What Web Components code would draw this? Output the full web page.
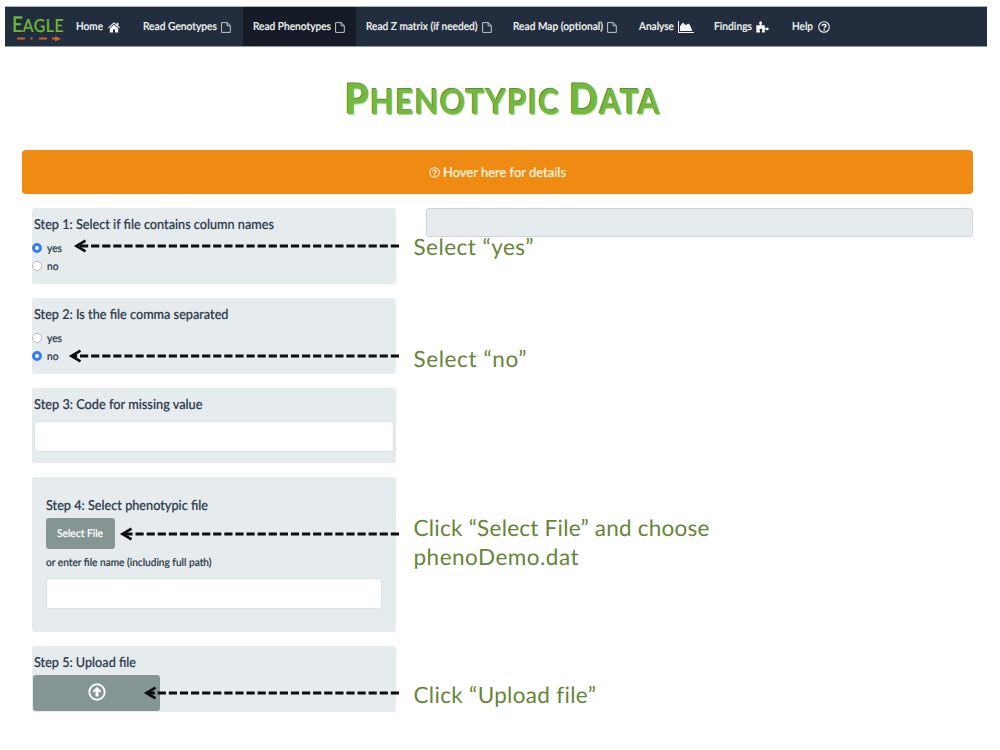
<!DOCTYPE html>
<html lang="en">
<head>
<meta charset="utf-8">
<title>Eagle - Phenotypic Data</title>
<style>
html,body{margin:0;background:#fff}
body{width:1000px;height:750px;overflow:hidden;font-family:Lato,"Open Sans",sans-serif;color:#2c3b4b;text-rendering:geometricPrecision}
</style>
</head>
<body>
<eagle-app></eagle-app>
<script>
const define=(name,css,html,after)=>customElements.define(name,class extends HTMLElement{
  connectedCallback(){
    if(this.shadowRoot)return;
    this.attachShadow({mode:'open'}).innerHTML=`<style>*{box-sizing:border-box}${css}</style>${typeof html==='function'?html(this):html}`;
    if(after)after(this);
  }
});

/* A single line of text set to a given width: condensed by default, or tracked. */
define('fit-text',`:host{display:inline-block;white-space:nowrap;font-weight:500;flex:none;-webkit-text-stroke:.2px currentColor}
  :host([tracked]){-webkit-text-stroke:0}span{display:inline-block;transform-origin:0 50%}`,
  '<span><slot></slot></span>',el=>{
    const w=+el.getAttribute('w'),s=el.shadowRoot.querySelector('span');
    const n=el.textContent.length,now=s.getBoundingClientRect().width;
    if(el.hasAttribute('tracked'))s.style.letterSpacing=((w-now)/(n-1)).toFixed(4)+'px';
    else s.style.transform=`scaleX(${(w/now).toFixed(4)})`;
    el.style.width=w+'px';
  });

const icons={
  home:['0 0 12 11','<path fill="currentColor" d="M6 .2 0 5.5l.7.8L6 1.700l5.300 4.600.7-.8-1.700-1.500V.8H8.600v1.700zM6 2.700 1.800 6.300V10.600H5V7.400h2v3.200h3.200V6.300z"/>'],
  file:['0 0 10 11','<path fill="none" stroke="currentColor" stroke-width=".95" stroke-linejoin="round" d="M.6.6h5.600l3.100 3v6.800H.6zM6.100.7v3.100h3.100"/>'],
  chart:['0 0 16 12','<path fill="currentColor" d="M0 0h1v11h15v1H0zM2 10V5.200L5 1.500l2.700 2.700L10.300 2.600 12 4l2.300 6z"/>'],
  puzzle:['0 0 13 12','<path fill="currentColor" d="M.3 4.300h3.400V3.200C2.600 2.200 3.200.3 4.600.3S6.500 2.200 5.500 3.200V4.300h3.300v2.900h1.100c.8-1 2.800-.7 2.800.7s-2 1.700-2.800.7H8.800v3H5.900V10c1-1.100.3-2.200-.9-2.200S3 9 4 10v1.600H.3z"/>'],
  help:['0 0 12 12','<circle cx="6" cy="6" r="5.300" fill="none" stroke="currentColor" stroke-width="1.100"/><path fill="none" stroke="currentColor" stroke-width="1.500" d="M4 4.800C4.100 3 7.900 2.900 7.900 4.800 7.900 6 6.200 6 6.200 7.300M6.200 8.100v1.400"/>'],
  up:['0 0 18 18','<circle cx="9" cy="9" r="7.700" fill="none" stroke="currentColor" stroke-width="1.900"/><path fill="currentColor" d="M9 3.800 4.600 8.300l1.200 1.300 1.700-1.600v5.500h3V8l1.700 1.600 1.200-1.300z"/>']
};
define('ui-icon',':host{display:block;flex:none}svg{display:block}',el=>{
  const [vb,p]=icons[el.getAttribute('name')];
  return `<svg width="${el.getAttribute('w')}" height="${el.getAttribute('h')}" viewBox="${vb}">${p}</svg>`;
});

define('nav-item',`:host{display:flex;align-items:center;height:100%;padding-left:10px;font-size:11px;line-height:14px;color:#f4f6f8;flex:none;padding-top:1px}
  :host([active]){background:#151c27;padding-left:9.500px}ui-icon{margin-left:4px}ui-icon[name=file]{color:#c9ced4}ui-icon[name=home],ui-icon[name=help]{margin-left:5px}`,
  el=>`<fit-text w="${el.getAttribute('tw')}">${el.getAttribute('label')}</fit-text><ui-icon name="${el.getAttribute('icon')}" w="${el.getAttribute('iw')}" h="${el.getAttribute('ih')}"></ui-icon>`,
  el=>el.style.width=el.getAttribute('w')+'px');

define('eagle-logo',`:host{display:flex;flex-direction:column;width:61px;padding:5px 0 0 7px;flex:none;height:100%}
  .n{font-size:18px;line-height:24px;color:#72b73c;height:24px}.n b{font-size:21.500px;font-weight:500}svg{display:block;margin-left:4px;overflow:visible}`,
  `<div class="n"><fit-text w="52"><b>E</b><span style="letter-spacing:.6px">AGLE</span></fit-text></div>
  <svg width="46" height="6" viewBox="0 0 46 6"><g fill="#c8662d"><path d="M1 1.500h8v2H1zM14.500 1.500h2v2h-2zM23 1.500h8v2h-8zM36 1.500h3V0l6 2.700L39 5.500v-2h-3z"/></g></svg>`);

define('nav-bar',':host{display:flex;width:982px;height:41px;margin-left:5px;background:#222e3d;border-top:1px solid #a9b3bd;border-bottom:1px solid #8e99a4}',`
  <eagle-logo></eagle-logo>
  <nav-item label="Home" tw="27" icon="home" iw="12" ih="11" w="67"></nav-item>
  <nav-item label="Read Genotypes" tw="74" icon="file" iw="10" ih="11" w="110"></nav-item>
  <nav-item active label="Read Phenotypes" tw="78" icon="file" iw="10" ih="11" w="113"></nav-item>
  <nav-item label="Read Z matrix (if needed)" tw="111.500" icon="file" iw="10" ih="11" w="147"></nav-item>
  <nav-item label="Read Map (optional)" tw="90" icon="file" iw="10" ih="11" w="125.500"></nav-item>
  <nav-item label="Analyse" tw="35" icon="chart" iw="16" ih="12" w="75.500"></nav-item>
  <nav-item label="Findings" tw="38" icon="puzzle" iw="13" ih="12" w="78"></nav-item>
  <nav-item label="Help" tw="21" icon="help" iw="12" ih="12" w="60"></nav-item>`);

define('page-title',`:host{display:flex;justify-content:center;height:103px;padding:24px 0 0 6px;color:#74b840;font-size:34.500px;line-height:54px}
  fit-text{font-weight:700;letter-spacing:1.400px;-webkit-text-stroke:0;text-shadow:-1px -1px 0 #5b8f3b,.5px .5px 1px #a9d58a}b{font-size:42px}`,
  '<fit-text w="316"><b>P</b>HENOTYPIC <b>D</b>ATA</fit-text>');

define('info-banner',':host{display:flex;align-items:center;justify-content:center;gap:3px;margin-left:22px;width:951px;height:44px;border-radius:4px;background:#ef8b13;color:#fff2de;font-size:13.500px}fit-text{line-height:18px}',
  '<ui-icon name="help" w="11" h="11"></ui-icon><fit-text w="123">Hover here for details</fit-text>');

define('step-card',':host{display:block;width:364px;border-radius:3px;background:#e6ebed;padding:6px 2px 0 1.500px}.t{height:20px;font-size:13.700px;line-height:19px}',
  el=>`<div class="t"><fit-text w="${el.getAttribute('tw')}">${el.getAttribute('label')}</fit-text></div><slot></slot>`,
  el=>{el.style.height=el.getAttribute('h')+'px'});

define('radio-row',`:host{display:flex;align-items:center;gap:5px;height:18px;font-size:11px}
  i{display:block;width:10px;height:10px;border-radius:50%;background:#fff;border:1px solid #b5babd;margin-left:-1.500px;flex:none}
  :host([checked]) i{border:3.500px solid #317ff5}`,
  el=>`<i></i><fit-text w="${el.getAttribute('tw')}">${el.getAttribute('label')}</fit-text>`);

define('text-box',':host{display:block;height:31px;background:#fff;border:1.500px solid #dae2e8;border-radius:3px;box-sizing:border-box}','');

define('ui-button',':host{display:flex;align-items:center;justify-content:center;border-radius:3px;background:#849593;color:#fff;font-size:10.800px;box-sizing:border-box}','<slot></slot>');

/* Annotation overlay: dashed arrow and its caption. */
define('hint-arrow',':host{position:absolute;display:block}svg{display:block;overflow:visible}',el=>{
  const w=399-el.getAttribute('x');
  return `<svg width="${w}" height="12" viewBox="0 0 ${w} 12"><g fill="none" stroke="#0c0e10"><path stroke-width="2.800" stroke-dasharray="8.200 2.900" d="M${w} 6H3"/><path stroke-width="2.700" d="M11.500.700 2.500 6l9 5.300"/></g></svg>`;
},el=>{el.style.left=el.getAttribute('x')+'px';el.style.top=el.getAttribute('y')-6+'px'});

define('hint-text',':host{position:absolute;left:413.500px;display:block;color:#67853a;font-size:22.500px;line-height:29px}::slotted(fit-text){display:block!important;font-weight:400!important}','<slot></slot>',
  el=>{el.style.top=el.getAttribute('y')+'px'});

define('eagle-app',`:host{display:block;position:relative;width:1000px;height:750px;padding-top:6px}
  .cols{display:flex;gap:30px;margin:14px 0 0 32px}
  .steps{display:flex;flex-direction:column;gap:14px}
  .out{width:547px;height:29px;background:#e6ebed;border:1px solid #cfd5d9;border-radius:3px}
  .radios{padding-top:5px}`,`
  <nav-bar></nav-bar>
  <page-title></page-title>
  <info-banner></info-banner>
  <div class="cols">
    <div class="steps">
      <step-card label="Step 1: Select if file contains column names" tw="240" h="76"><div class="radios"><radio-row checked label="yes" tw="15"></radio-row><radio-row label="no" tw="11.500"></radio-row></div></step-card>
      <step-card label="Step 2: Is the file comma separated" tw="194.500" h="76"><div class="radios"><radio-row label="yes" tw="15"></radio-row><radio-row checked label="no" tw="11.500"></radio-row></div></step-card>
      <step-card label="Step 3: Code for missing value" tw="168.500" h="75"><text-box style="margin-top:7px"></text-box></step-card>
      <step-card label="Step 4: Select phenotypic file" tw="162" h="155" style="padding:18px 14px 0 13.500px">
        <ui-button style="width:69px;height:31px;margin-top:3px"><fit-text w="46">Select File</fit-text></ui-button>
        <div style="font-size:10.800px;line-height:16px;height:29px;padding-top:6px"><fit-text w="165.500">or enter file name (including full path)</fit-text></div>
        <text-box></text-box>
      </step-card>
      <step-card label="Step 5: Upload file" tw="102" h="66"><ui-button style="width:127px;height:36px;margin-top:3px;margin-left:-.5px;padding-bottom:3px"><ui-icon name="up" w="18" h="18"></ui-icon></ui-button></step-card>
    </div>
    <div class="out"></div>
  </div>
  <hint-arrow x="74" y="246.300"></hint-arrow>
  <hint-arrow x="69" y="355.500"></hint-arrow>
  <hint-arrow x="120" y="533.500"></hint-arrow>
  <hint-arrow x="144" y="693"></hint-arrow>
  <hint-text y="232"><fit-text tracked w="120">Select “yes”</fit-text></hint-text>
  <hint-text y="344"><fit-text tracked w="113">Select “no”</fit-text></hint-text>
  <hint-text y="513"><fit-text tracked w="296">Click “Select File” and choose</fit-text><fit-text tracked w="165">phenoDemo.dat</fit-text></hint-text>
  <hint-text y="680"><fit-text tracked w="182">Click “Upload file”</fit-text></hint-text>`);
</script>
</body>
</html>
